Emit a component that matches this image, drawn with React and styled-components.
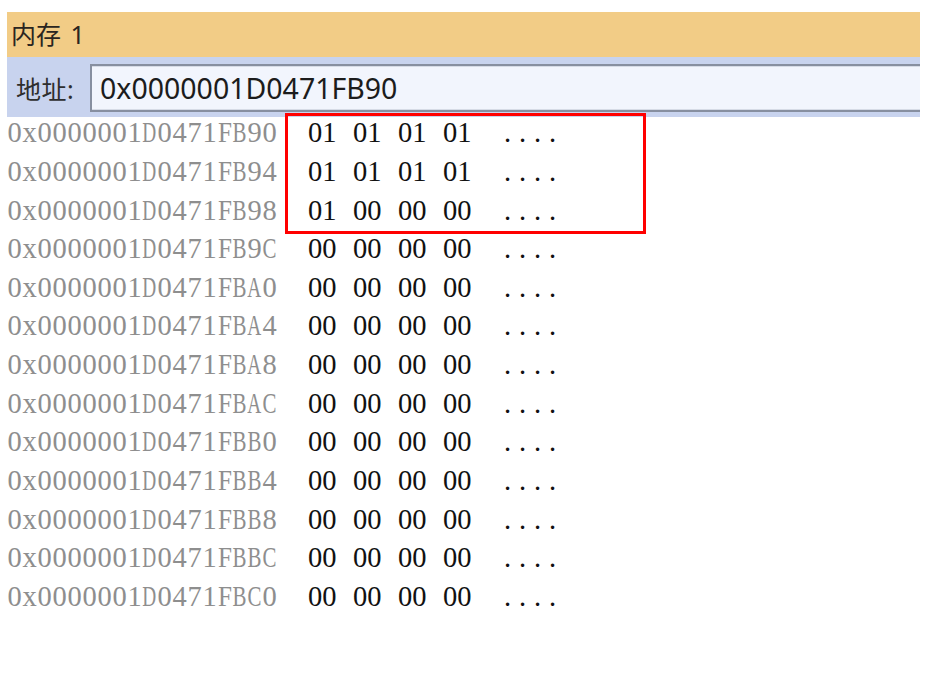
import React from "react";
import styled, { createGlobalStyle } from "styled-components";

const Global = createGlobalStyle`
  html, body { margin: 0; padding: 0; background: #ffffff; }
  body { font-family: "Noto Sans", "Noto Sans CJK SC", sans-serif; }
`;

const Page = styled.div`
  padding: 12px 0 0 7px;
  width: 913px;
`;

const TitleBar = styled.div`
  height: 45px;
  box-sizing: border-box;
  background: #f2cc86;
  display: flex;
  align-items: center;
  padding: 0 0 3px 4px;
  font-family: "Noto Sans", "Noto Sans CJK SC", sans-serif;
  font-size: 25px;
  word-spacing: 3px;
  color: #2a2520;
`;

const AddressBar = styled.div`
  height: 60px;
  box-sizing: border-box;
  background: #c8d3ee;
  display: flex;
  align-items: center;
  padding: 7px 0 5px 9px;
`;

const Label = styled.span`
  width: 74px;
  font-family: "Noto Sans", "Noto Sans CJK SC", sans-serif;
  font-size: 25px;
  letter-spacing: 0.5px;
  color: #2e2e2e;
  white-space: nowrap;
`;

const Field = styled.input`
  flex: 1;
  min-width: 0;
  height: 48px;
  box-sizing: border-box;
  margin: 0;
  border: 2px solid #878fa0;
  border-right: none;
  box-shadow: inset 0 1px 0 #d6dbe6, inset 0 -1px 0 #d6dbe6;
  background: #f2f5fd;
  padding: 0 0 0 8px;
  font-family: "Noto Sans", sans-serif;
  font-size: 28.5px;
  color: #1c1c1c;
  outline: none;
`;

const Grid = styled.div`
  position: relative;
  margin-top: -2.8px;
`;

const Row = styled.div`
  display: flex;
  height: 38.67px;
  line-height: 38.67px;
  font-family: "Liberation Serif", serif;
  font-size: 28.5px;
  white-space: nowrap;
`;

const Addr = styled.span`
  display: flex;
  width: 301px;
  color: #8e8e8e;
`;

const Cell = styled.span`
  display: flex;
  justify-content: center;
  width: 15px;
`;

const Glyph = styled.span`
  display: inline-block;
  transform: scaleX(${(p) => p.$scale});
`;

const Byte = styled.span`
  width: 45px;
  color: #111111;
`;

const Ascii = styled.span`
  padding-left: 16px;
  letter-spacing: 7.9px;
  color: #111111;
`;

const Highlight = styled.div`
  position: absolute;
  top: -1.4px;
  left: 278px;
  width: 361px;
  height: 121px;
  box-sizing: border-box;
  border: 3px solid #ff0000;
  pointer-events: none;
`;

const ADVANCE = { A: 0.722, B: 0.667, C: 0.667, D: 0.722, E: 0.611, F: 0.556 };

const suffixes = ["90", "94", "98", "9C", "A0", "A4", "A8", "AC", "B0", "B4", "B8", "BC", "C0"];
const rows = suffixes.map((s, i) => ({
  addr: "0x0000001D0471FB" + s,
  bytes: i < 2 ? ["01", "01", "01", "01"] : i === 2 ? ["01", "00", "00", "00"] : ["00", "00", "00", "00"],
}));

function MonoText({ text }) {
  return text.split("").map((c, i) => (
    <Cell key={i}>
      <Glyph $scale={ADVANCE[c] ? Math.min(1, 0.49 / ADVANCE[c]) : 1}>{c}</Glyph>
    </Cell>
  ));
}

export default function App() {
  return (
    <>
      <Global />
      <Page>
        <TitleBar>内存 1</TitleBar>
        <AddressBar>
          <Label>地址:</Label>
          <Field readOnly value="0x0000001D0471FB90" />
        </AddressBar>
        <Grid>
          {rows.map((r) => (
            <Row key={r.addr}>
              <Addr>
                <MonoText text={r.addr} />
              </Addr>
              {r.bytes.map((b, j) => (
                <Byte key={j}>{b}</Byte>
              ))}
              <Ascii>....</Ascii>
            </Row>
          ))}
          <Highlight />
        </Grid>
      </Page>
    </>
  );
}
